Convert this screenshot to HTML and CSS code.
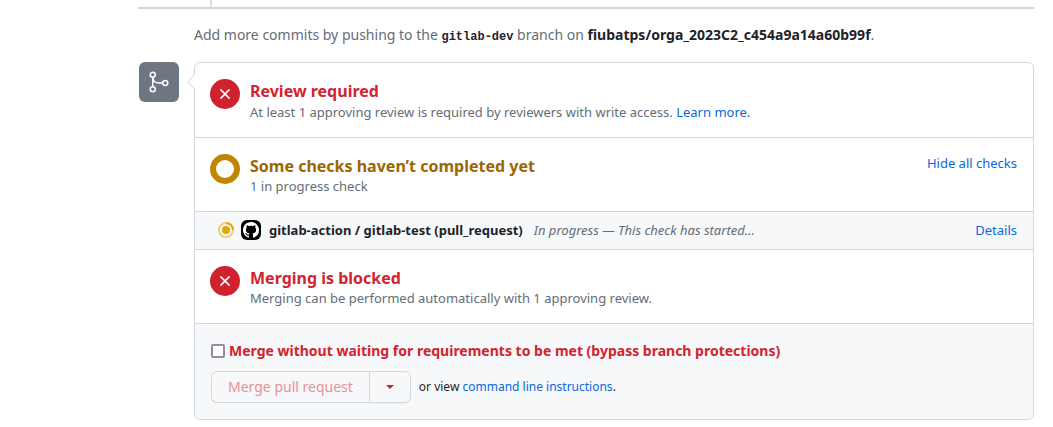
FILE: index.html
```
<!DOCTYPE html>
<html lang="en">
<head>
<meta charset="utf-8">
<title>Merge pull request</title>
<link rel="stylesheet" href="styles.css">
</head>
<body>
<main class="discussion">
  <div class="timeline-end"></div>
  <p class="push-hint">Add more commits by pushing to the <code class="branch">gitlab-dev</code> branch on <strong class="repo">fiubatps/orga_2023C2_c454a9a14a60b99f</strong>.</p>

  <div class="merge">
    <div class="merge-badge">
      <svg width="24" height="24" viewBox="0 0 24 24" fill="none" stroke="currentColor" stroke-width="1.5" aria-hidden="true">
        <circle cx="5.75" cy="4.75" r="2.5"/><circle cx="5.75" cy="19.25" r="2.5"/><circle cx="18.25" cy="13" r="2.5"/>
        <path d="M5.75 7.25v9.5M5.75 7.25c0 3.5 2.5 5.75 6 5.75h4"/>
      </svg>
    </div>
    <div class="merge-box">
      <svg class="caret" width="8" height="16" viewBox="0 0 8 16" aria-hidden="true"><path d="M8 0L0.700 8L8 16" fill="#fff" stroke="#d0d7de"/></svg>

      <section class="item item-first">
        <span class="status status-error"><svg width="16" height="16" viewBox="0 0 16 16" aria-hidden="true"><path d="M3.900 3.900l8.200 8.200M12.100 3.900l-8.200 8.200" stroke="#fff" stroke-width="1.500" stroke-linecap="round"/></svg></span>
        <div class="item-body">
          <h3 class="heading danger">Review required</h3>
          <p class="note">At least 1 approving review is required by reviewers with write access. <a class="link" href="#">Learn more.</a></p>
        </div>
      </section>

      <section class="item">
        <span class="status status-pending"></span>
        <div class="item-body">
          <h3 class="heading attention">Some checks haven’t completed yet</h3>
          <p class="note">1 in progress check</p>
        </div>
        <button class="link toggle" type="button">Hide all checks</button>
      </section>

      <div class="check">
        <svg class="progress" width="16" height="16" viewBox="0 0 16 16" fill="none" aria-hidden="true">
          <circle cx="8" cy="8" r="7" stroke="#dbab0a" stroke-opacity=".5" stroke-width="2"/>
          <path d="M8 1a7 7 0 0 1 7 7" stroke="#dbab0a" stroke-width="2"/>
          <circle cx="8" cy="8" r="4" fill="#dbab0a"/>
        </svg>
        <span class="avatar">
          <svg width="16" height="16" viewBox="0 0 16 16" fill="#fff" aria-hidden="true"><path d="M8 0C3.580 0 0 3.580 0 8c0 3.540 2.290 6.530 5.470 7.590.4.070.55-.17.55-.38 0-.19-.01-.82-.01-1.490-2.010.37-2.530-.49-2.690-.94-.09-.23-.48-.94-.82-1.130-.28-.15-.68-.52-.01-.53.63-.01 1.080.58 1.230.82.72 1.210 1.870.87 2.330.66.070-.52.28-.87.51-1.070-1.780-.2-3.640-.89-3.640-3.950 0-.87.31-1.590.82-2.150-.08-.2-.36-1.020.08-2.120 0 0 .67-.21 2.200.82.64-.18 1.320-.27 2-.27s1.360.09 2 .27c1.530-1.040 2.200-.82 2.200-.82.44 1.100.16 1.920.08 2.120.51.56.82 1.270.82 2.150 0 3.070-1.870 3.750-3.650 3.950.29.25.54.73.54 1.480 0 1.070-.01 1.930-.01 2.200 0 .21.15.46.55.38A8.010 8.010 0 0 0 16 8c0-4.420-3.580-8-8-8z"/></svg>
        </span>
        <strong class="check-name">gitlab-action / gitlab-test (pull_request)</strong>
        <em class="check-state">In progress — This check has started...</em>
        <a class="link details" href="#">Details</a>
      </div>

      <section class="item">
        <span class="status status-error"><svg width="16" height="16" viewBox="0 0 16 16" aria-hidden="true"><path d="M3.900 3.900l8.200 8.200M12.100 3.900l-8.200 8.200" stroke="#fff" stroke-width="1.500" stroke-linecap="round"/></svg></span>
        <div class="item-body">
          <h3 class="heading danger">Merging is blocked</h3>
          <p class="note">Merging can be performed automatically with 1 approving review.</p>
        </div>
      </section>

      <div class="actions">
        <div class="bypass">
          <input class="checkbox" type="checkbox" id="bypass">
          <label class="danger" for="bypass">Merge without waiting for requirements to be met (bypass branch protections)</label>
        </div>
        <div class="action-row">
          <div class="button-group">
            <button class="btn btn-merge" type="button" disabled>Merge pull request</button>
            <button class="btn btn-menu" type="button" aria-label="Select merge method"><span class="drop-caret"></span></button>
          </div>
          <span class="cli">or view <a class="link" href="#">command line instructions</a>.</span>
        </div>
      </div>
    </div>
  </div>
</main>
</body>
</html>
```
FILE: styles.css
```
* {
  box-sizing: border-box;
}

body {
  margin: 0;
  background: #fff;
  color: #1f2328;
  font-family: "Noto Sans", sans-serif;
  font-size: 14px;
  line-height: 20px;
}

p,
h3 {
  margin: 0;
}

button,
input {
  font: inherit;
}

.discussion {
  padding: 0 19px 7px 138px;
}

.timeline-end {
  height: 9px;
  border-bottom: 2px solid #d0d7de;
  background: linear-gradient(#d8dee4, #d8dee4) 72px 0 / 2px 100% no-repeat;
}

.push-hint {
  padding: 16px 0 15px 56px;
  color: #656d76;
}

.branch {
  color: #1f2328;
  font-family: "Liberation Mono", monospace;
  font-size: 12px;
  font-weight: 700;
}

.repo {
  color: #1f2328;
  font-weight: 700;
}

.link {
  color: #0969da;
  text-decoration: none;
}

.danger {
  color: #d1242f;
}

.attention {
  color: #9a6700;
}

.merge {
  display: flex;
  align-items: flex-start;
  gap: 15px;
  padding-left: 1px;
}

.merge-badge {
  display: flex;
  flex: none;
  align-items: center;
  justify-content: center;
  width: 40px;
  height: 40px;
  border-radius: 6px;
  background: #6e7781;
  color: #fff;
}

.merge-box {
  position: relative;
  flex: 1;
  border: 1px solid #d0d7de;
  border-radius: 6px;
}

.caret {
  position: absolute;
  top: 11px;
  left: -8px;
}

.item {
  display: flex;
  align-items: flex-start;
  gap: 10px;
  padding: 16px 16px 16px 15px;
  border-bottom: 1px solid #d0d7de;
}

.item-first .note {
  line-height: 18px;
}

.item-body {
  flex: 1;
}

.status {
  display: flex;
  flex: none;
  align-items: center;
  justify-content: center;
  width: 30px;
  height: 30px;
  border-radius: 50%;
}

.status-error {
  background: #cf222e;
}

.status-pending {
  border: 6px solid #bf8700;
}

.heading {
  font-size: 16px;
  font-weight: 700;
  line-height: 24px;
}

.note {
  color: #656d76;
  font-size: 13px;
  line-height: 17px;
}

.toggle {
  padding: 0;
  border: 0;
  background: none;
  font-size: 13px;
  line-height: 18px;
  cursor: pointer;
}

.check {
  display: flex;
  align-items: center;
  padding: 8px 16px 9px 23px;
  border-bottom: 1px solid #d0d7de;
  background: #f6f8fa;
  font-size: 13px;
}

.progress {
  flex: none;
}

.avatar {
  display: flex;
  flex: none;
  align-items: center;
  justify-content: center;
  width: 20px;
  height: 20px;
  margin: 0 8px 0 7px;
  border-radius: 6px;
  background: #000;
}

.check-name {
  font-weight: 700;
}

.check-state {
  margin-left: 11px;
  color: #656d76;
}

.details {
  margin-left: auto;
}

.actions {
  padding: 16px;
  border-radius: 0 0 6px 6px;
  background: #f6f8fa;
}

.bypass {
  display: flex;
  align-items: center;
  gap: 4px;
  height: 22px;
  margin-bottom: 9px;
  font-weight: 700;
}

.checkbox {
  width: 14px;
  height: 14px;
  margin: 0;
  border: 2px solid #8f8f9d;
  border-radius: 2px;
  background: #fff;
  appearance: none;
}

.checkbox:checked {
  background: #0969da;
}

.action-row {
  display: flex;
  align-items: center;
  gap: 8px;
}

.button-group {
  display: flex;
}

.btn {
  height: 32px;
  border: 1px solid #d5d8da;
  background: #f6f8fa;
}

.btn-merge {
  padding: 0 16px;
  border-right: 0;
  border-radius: 6px 0 0 6px;
  color: #e59297;
}

.btn-menu {
  display: flex;
  align-items: center;
  justify-content: center;
  width: 42px;
  border-radius: 0 6px 6px 0;
  box-shadow: 0 1px 0 rgba(31, 35, 40, 0.04);
}

.drop-caret {
  border: 4px solid transparent;
  border-top-color: #cf222e;
  border-bottom: 0;
}

.cli {
  font-size: 12px;
}
```
